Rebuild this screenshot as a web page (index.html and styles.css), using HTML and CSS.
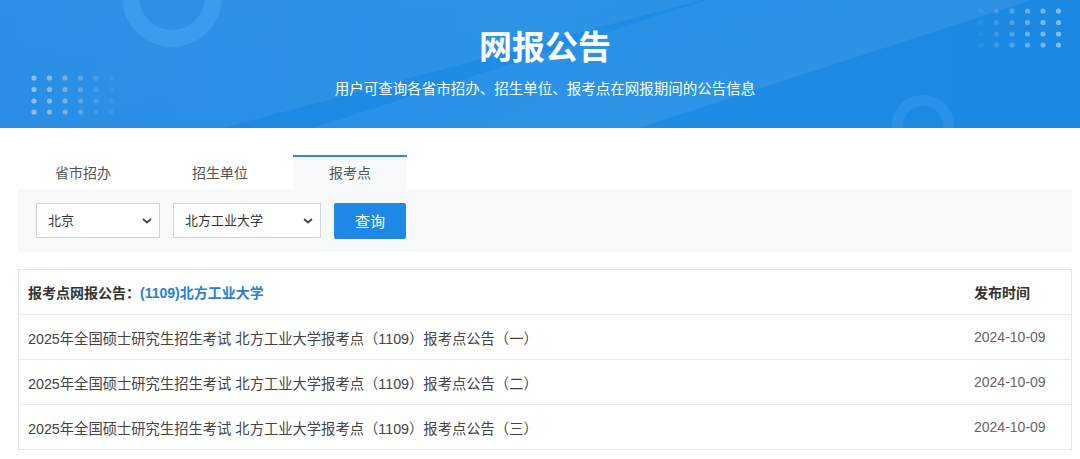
FILE: index.html
```html
<!DOCTYPE html>
<html lang="zh-CN">
<head>
    <meta charset="UTF-8">
    <meta name="viewport" content="width=device-width, initial-scale=1.0">
    <title>网报公告</title>
    <link rel="stylesheet" href="styles.css">
</head>
<body>
    <div class="banner">
        <span class="ring ring-top"></span>
        <span class="ring ring-bottom"></span>
        <svg class="dots dots-left" width="90" height="40" viewBox="0 0 90 40">
            <g fill="#fff">
                <g opacity="0.45"><circle cx="3" cy="3" r="2.6"/><circle cx="3" cy="14.5" r="2.6"/><circle cx="3" cy="26" r="2.6"/><circle cx="3" cy="37" r="2.6"/></g>
                <g opacity="0.4"><circle cx="18.5" cy="3" r="2.6"/><circle cx="18.5" cy="14.5" r="2.6"/><circle cx="18.5" cy="26" r="2.6"/><circle cx="18.5" cy="37" r="2.6"/></g>
                <g opacity="0.32"><circle cx="34" cy="3" r="2.6"/><circle cx="34" cy="14.5" r="2.6"/><circle cx="34" cy="26" r="2.6"/><circle cx="34" cy="37" r="2.6"/></g>
                <g opacity="0.22"><circle cx="49.5" cy="3" r="2.6"/><circle cx="49.5" cy="14.5" r="2.6"/><circle cx="49.5" cy="26" r="2.6"/><circle cx="49.5" cy="37" r="2.6"/></g>
                <g opacity="0.13"><circle cx="65" cy="3" r="2.6"/><circle cx="65" cy="14.5" r="2.6"/><circle cx="65" cy="26" r="2.6"/><circle cx="65" cy="37" r="2.6"/></g>
                <g opacity="0.06"><circle cx="80.5" cy="3" r="2.6"/><circle cx="80.5" cy="14.5" r="2.6"/><circle cx="80.5" cy="26" r="2.6"/><circle cx="80.5" cy="37" r="2.6"/></g>
            </g>
        </svg>
        <svg class="dots dots-right" width="90" height="40" viewBox="0 0 90 40">
            <g fill="#fff">
                <g opacity="0.06"><circle cx="3" cy="3" r="2.6"/><circle cx="3" cy="14.5" r="2.6"/><circle cx="3" cy="26" r="2.6"/><circle cx="3" cy="37" r="2.6"/></g>
                <g opacity="0.13"><circle cx="18.5" cy="3" r="2.6"/><circle cx="18.5" cy="14.5" r="2.6"/><circle cx="18.5" cy="26" r="2.6"/><circle cx="18.5" cy="37" r="2.6"/></g>
                <g opacity="0.22"><circle cx="34" cy="3" r="2.6"/><circle cx="34" cy="14.5" r="2.6"/><circle cx="34" cy="26" r="2.6"/><circle cx="34" cy="37" r="2.6"/></g>
                <g opacity="0.32"><circle cx="49.5" cy="3" r="2.6"/><circle cx="49.5" cy="14.5" r="2.6"/><circle cx="49.5" cy="26" r="2.6"/><circle cx="49.5" cy="37" r="2.6"/></g>
                <g opacity="0.4"><circle cx="65" cy="3" r="2.6"/><circle cx="65" cy="14.5" r="2.6"/><circle cx="65" cy="26" r="2.6"/><circle cx="65" cy="37" r="2.6"/></g>
                <g opacity="0.45"><circle cx="80.5" cy="3" r="2.6"/><circle cx="80.5" cy="14.5" r="2.6"/><circle cx="80.5" cy="26" r="2.6"/><circle cx="80.5" cy="37" r="2.6"/></g>
            </g>
        </svg>
        <h1 class="banner-title">网报公告</h1>
        <p class="banner-sub">用户可查询各省市招办、招生单位、报考点在网报期间的公告信息</p>
    </div>

    <div class="content">
        <div class="tabs">
            <div class="tab">省市招办</div>
            <div class="tab">招生单位</div>
            <div class="tab tab-active">报考点</div>
        </div>
        <div class="search-panel">
            <select class="select select-prov">
                <option>北京</option>
            </select>
            <select class="select select-unit">
                <option>北方工业大学</option>
            </select>
            <button class="search-btn">查询</button>
        </div>

        <div class="notice-table">
            <div class="notice-row notice-head">
                <div class="notice-title">报考点网报公告：<span class="unit-name">(1109)北方工业大学</span></div>
                <div class="notice-date">发布时间</div>
            </div>
            <div class="notice-row">
                <div class="notice-title">2025年全国硕士研究生招生考试 北方工业大学报考点（1109）报考点公告（一）</div>
                <div class="notice-date">2024-10-09</div>
            </div>
            <div class="notice-row">
                <div class="notice-title">2025年全国硕士研究生招生考试 北方工业大学报考点（1109）报考点公告（二）</div>
                <div class="notice-date">2024-10-09</div>
            </div>
            <div class="notice-row">
                <div class="notice-title">2025年全国硕士研究生招生考试 北方工业大学报考点（1109）报考点公告（三）</div>
                <div class="notice-date">2024-10-09</div>
            </div>
        </div>
    </div>
</body>
</html>
```

FILE: styles.css
```css
* { box-sizing: border-box; margin: 0; padding: 0; }
body { background: #fff; font-family: "Liberation Sans", "Noto Sans CJK SC", sans-serif; color: #333; }

.banner { position: relative; height: 128px; overflow: hidden; text-align: center; color: #fff; padding-left: 10px;
    background:
        linear-gradient(162deg, rgba(255,255,255,0) 0%, rgba(255,255,255,0) 48%, rgba(255,255,255,0.05) 48%, rgba(255,255,255,0.07) 70%, rgba(255,255,255,0) 70%),
        linear-gradient(-15deg, rgba(255,255,255,0) 0%, rgba(255,255,255,0) 55%, rgba(255,255,255,0.06) 55%, rgba(255,255,255,0.08) 100%),
        linear-gradient(90deg, #1b86e3 0%, #1f8de6 50%, #1b88e2 100%); }
.ring { position: absolute; border-radius: 50%; border-style: solid; border-color: rgba(80,180,255,0.35); }
.ring-top { width: 100px; height: 100px; left: 122px; top: -53px; border-width: 17px; }
.ring-bottom { width: 62px; height: 62px; left: 892px; top: 95px; border-width: 11px; border-color: rgba(70,170,250,0.3); }
.dots { position: absolute; }
.dots-left { left: 31px; top: 75px; }
.dots-right { left: 978px; top: 8px; }
.banner-title { position: relative; padding-top: 27px; font-size: 33px; font-weight: bold; line-height: 42px; }
.banner-sub { position: relative; margin-top: 10px; font-size: 14.5px; line-height: 20px; }

.content { margin: 0 8px 0 18px; }
.tabs { display: flex; gap: 9px; padding: 27px 0 0 1px; }
.tab { height: 34px; line-height: 33px; padding: 0 36px; font-size: 14px; color: #555; border-top: 2px solid transparent; }
.tab-active { background: #f7f9fb; border-top-color: #2d8ae0; }

.search-panel { display: flex; align-items: center; gap: 13px; height: 63px; padding: 0 18px; background: #f7f9fb; }
.select { appearance: none; -webkit-appearance: none; height: 35px; padding: 0 24px 0 11px; border: 1px solid #d4d4d4; background: #fff; font-family: inherit; font-size: 13px; color: #333; border-radius: 0;
    background-image: url("data:image/svg+xml;utf8,<svg xmlns='http://www.w3.org/2000/svg' width='10' height='6' viewBox='0 0 10 6'><path d='M1 1l4 3.5L9 1' fill='none' stroke='%23444' stroke-width='1.8'/></svg>");
    background-repeat: no-repeat; background-position: right 7px center; }
.select-prov { width: 124px; }
.select-unit { width: 148px; }
.search-btn { width: 72px; height: 36px; border: none; border-radius: 2px; background: #1e88e5; color: #fff; font-family: inherit; font-size: 15px; cursor: pointer; }

.notice-table { margin-top: 17px; border: 1px solid #e6e6e6; }
.notice-row { display: flex; align-items: center; height: 45px; padding: 0 24px 0 9px; border-top: 1px solid #ebebeb; font-size: 14.3px; color: #444; }
.notice-row:first-child { height: 44px; border-top: none; }
.notice-title { flex: 1; }
.notice-date { width: 73px; color: #666; white-space: nowrap; font-size: 14px; }
.notice-head { font-weight: bold; color: #333; font-size: 14px; }
.notice-head .notice-date { color: #333; }
.unit-name { color: #2a80d8; }
```
